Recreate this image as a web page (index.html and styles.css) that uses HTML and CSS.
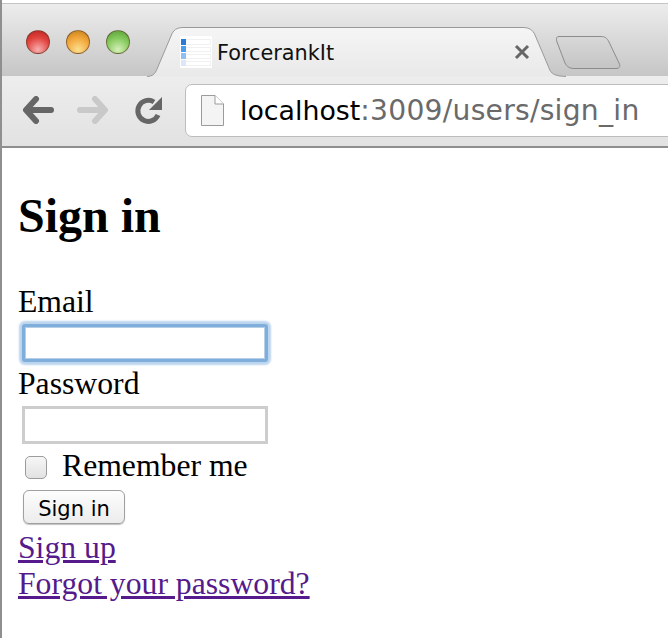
FILE: index.html
```html
<!DOCTYPE html>
<html lang="en">
<head>
  <meta charset="UTF-8" />
  <title>ForcerankIt</title>
  <link rel="stylesheet" href="styles.css">
</head>
<body>
  <header class="browser">
    <div class="tabstrip">
      <div class="lights">
        <span class="light red"></span>
        <span class="light orange"></span>
        <span class="light green"></span>
      </div>
      <div class="tab">
        <svg class="tab-shape" width="420" height="50" viewBox="0 0 420 50">
          <defs>
            <linearGradient id="tabfill" x1="0" y1="0" x2="0" y2="1">
              <stop offset="0" stop-color="#f5f5f5"/>
              <stop offset="1" stop-color="#e9e9e9"/>
            </linearGradient>
          </defs>
          <path d="M0 49.5C6 49 8 47 10 42L24 9C26 3 30 .5 36 .5H376C382 .5 386 3 388 8L402 41C404 47 408 49 419 49.5" fill="url(#tabfill)" stroke="#9a9a9a"/>
        </svg>
        <svg class="favicon" width="32" height="32" viewBox="0 0 32 32">
          <rect width="32" height="32" fill="#fff"/>
          <g fill="#f1f1f1">
            <rect x="1" y="3" width="30" height="6"/>
            <rect x="1" y="11" width="30" height="5"/>
            <rect x="1" y="18" width="30" height="5"/>
            <rect x="1" y="25" width="30" height="5"/>
          </g>
          <g fill="#fff">
            <rect x="6" y="4" width="24" height="4"/>
            <rect x="6" y="12" width="24" height="3"/>
            <rect x="6" y="19" width="24" height="3"/>
            <rect x="6" y="26" width="24" height="3"/>
          </g>
          <rect x="1" y="3" width="5" height="6" fill="#2a7ad8"/>
          <rect x="1" y="10" width="5" height="6" fill="#4d9cf0"/>
          <rect x="1" y="17" width="5" height="6" fill="#8fbff5"/>
          <rect x="1" y="24" width="5" height="6" fill="#dde7fa"/>
        </svg>
        <span class="tab-title">ForcerankIt</span>
        <svg class="tab-close" width="16" height="16" viewBox="0 0 16 16">
          <path d="M2 2L14 14M14 2L2 14" stroke="#666" stroke-width="3"/>
        </svg>
      </div>
      <svg class="newtab" width="66" height="34" viewBox="0 0 66 34">
        <defs>
          <linearGradient id="newfill" x1="0" y1="0" x2="0" y2="1">
            <stop offset="0" stop-color="#d8d8d8"/>
            <stop offset="1" stop-color="#c4c4c4"/>
          </linearGradient>
        </defs>
        <path d="M3 .5H45C49 .5 51 2 53 6L63 27C65 31 63 32.5 60 32.5H18C14 32.5 11 31 9 27L1 6C0 3 0 .5 3 .5Z" fill="url(#newfill)" stroke="#8c8c8c"/>
      </svg>
    </div>
    <div class="toolbar">
      <svg class="nav" width="32" height="28" viewBox="0 0 32 28">
        <path d="M14 3L4 14L14 25M5 14H29" fill="none" stroke="#666" stroke-width="6" stroke-linecap="round" stroke-linejoin="round"/>
      </svg>
      <svg class="nav" width="32" height="28" viewBox="0 0 32 28">
        <path d="M18 3L28 14L18 25M27 14H3" fill="none" stroke="#c9c9c9" stroke-width="6" stroke-linecap="round" stroke-linejoin="round"/>
      </svg>
      <svg class="nav reload" width="30" height="30" viewBox="0 0 30 30">
        <path d="M24 20A10.500 10.500 0 1 1 20 7" fill="none" stroke="#666" stroke-width="5"/>
        <path d="M28 2V15H15Z" fill="#666"/>
      </svg>
      <div class="omnibox">
        <svg class="page-icon" width="23" height="31" viewBox="0 0 23 31">
          <path d="M.5 .5H14L22.500 9V30.500H.5Z" fill="#f4f4f4" stroke="#9b9b9b"/>
          <path d="M14 .5V9H22.500" fill="#fff" stroke="#9b9b9b"/>
        </svg>
        <span class="url"><span class="host">localhost</span>:3009/users/sign_in</span>
      </div>
    </div>
  </header>

  <main>
    <h1>Sign in</h1>
    <form>
      <div class="row"><label>Email</label></div>
      <div class="row field"><input type="email" class="focused"></div>
      <div class="row"><label>Password</label></div>
      <div class="row field"><input type="password"></div>
      <div class="row remember">
        <input type="checkbox" id="remember">
        <label for="remember">Remember me</label>
      </div>
      <div class="row action"><button type="button">Sign in</button></div>
    </form>
    <a href="#">Sign up</a><br>
    <a href="#">Forgot your password?</a>
  </main>
</body>
</html>
```

FILE: styles.css
```css
html, body {
  margin: 0;
  height: 638px;
  overflow: hidden;
  background: white;
}

body {
  font-family: "Liberation Serif", serif;
  font-size: 31.7px;
  line-height: 36px;
  color: black;
  border-left: 2px solid #8f8f8f;
  box-sizing: border-box;
}

.browser {
  font-family: "DejaVu Sans", sans-serif;
  margin-left: -2px;
}

.tabstrip {
  display: flex;
  height: 73px;
  margin-top: 3px;
  padding-left: 2px;
  border-top: 1px solid #c4c4c4;
  box-sizing: border-box;
  background: linear-gradient(#ececec, #c6c6c6);
  position: relative;
}

.lights {
  display: flex;
  gap: 16px;
  padding: 26px 0 0 24px;
}

.light {
  width: 24px;
  height: 24px;
  border-radius: 50%;
  box-sizing: border-box;
  border: 1px solid rgba(90, 60, 40, 0.6);
}

.red { background: radial-gradient(circle at 50% 85%, #f7b0b0, #e2443f 55%, #b5201f); }
.orange { background: radial-gradient(circle at 50% 85%, #fbe08e, #f2a63a 55%, #bd7c18); }
.green { background: radial-gradient(circle at 50% 85%, #d6f0b8, #84c95c 55%, #559a33); }

.tab {
  position: absolute;
  left: 147px;
  top: 23px;
  width: 420px;
  height: 50px;
  display: flex;
  align-items: center;
}

.tab-shape {
  position: absolute;
  left: 0;
  top: 0;
}

.favicon {
  position: absolute;
  left: 33px;
  top: 9px;
}

.tab-title {
  position: absolute;
  left: 70px;
  top: 12px;
  font-size: 20.8px;
  line-height: 28px;
  color: #111;
}

.tab-close {
  position: absolute;
  left: 367px;
  top: 17px;
}

.newtab {
  position: absolute;
  left: 556px;
  top: 32px;
}

.toolbar {
  display: flex;
  align-items: center;
  height: 72px;
  box-sizing: border-box;
  padding: 0 0 2px 22px;
  background: linear-gradient(#ededed, #e2e2e2);
  border-bottom: 2px solid #8e8e8e;
}

.nav {
  flex: none;
  margin-right: 23px;
}

.reload {
  margin-left: 2px;
  margin-right: 21px;
}

.omnibox {
  flex: none;
  display: flex;
  align-items: center;
  width: 500px;
  height: 53px;
  box-sizing: border-box;
  background: white;
  border: 1px solid #bdbdbd;
  border-radius: 7px 0 0 7px;
}

.page-icon {
  margin-left: 15px;
  flex: none;
}

.url {
  margin: 2px 0 0 16px;
  font-size: 28.2px;
  letter-spacing: 0.25px;
  color: #6a6a6a;
  white-space: nowrap;
}

.host {
  font-size: 26.8px;
  letter-spacing: 0;
  color: black;
}

main {
  padding: 0 16px;
}

h1 {
  font-size: 48px;
  line-height: 54px;
  margin: 41px 0 41px;
}

.row {
  display: flex;
  align-items: center;
}

.field {
  height: 46px;
  padding-left: 4px;
}

input[type="email"], input[type="password"] {
  width: 246px;
  height: 38px;
  padding: 0;
  box-sizing: border-box;
  border: 3px solid #cdcdcd;
  background: white;
}

input.focused {
  border-color: #80aedb;
  border-radius: 3px;
  box-shadow: 0 0 2px 3px #bcd5ee, inset 0 0 0 1px #b5cfea;
}

.remember {
  height: 36px;
}

.remember input {
  width: 22px;
  height: 23px;
  margin: 2px 15px 0 7px;
  appearance: none;
  box-sizing: border-box;
  border: 1px solid #9c9c9c;
  border-radius: 5px;
  background: linear-gradient(#f6f6f6, #e2e2e2);
}

.action {
  height: 46px;
  padding-left: 5px;
}

button {
  width: 102px;
  height: 34px;
  padding: 3px 0 0;
  font-family: "DejaVu Sans", sans-serif;
  font-size: 21px;
  color: black;
  background: linear-gradient(#fdfdfd, #ececec);
  border: 1px solid #a0a0a0;
  border-radius: 6px;
  box-shadow: 0 1px 1px rgba(0, 0, 0, 0.25);
}

a {
  color: #551a8b;
}
```
